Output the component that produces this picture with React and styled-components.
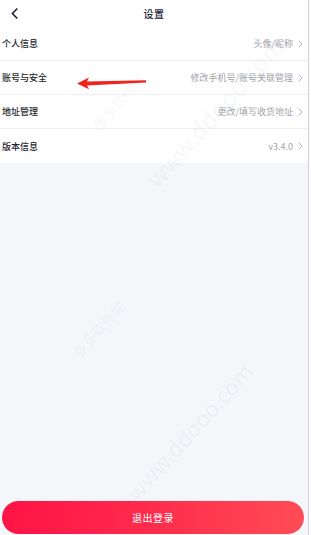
import React from 'react';
import styled, { createGlobalStyle } from 'styled-components';

const GlobalStyle = createGlobalStyle`
  html, body {
    margin: 0;
    padding: 0;
    background: #ffffff;
  }
  body {
    font-family: "Noto Sans CJK SC", "Noto Sans", sans-serif;
  }
`;

const Page = styled.div`
  position: relative;
  width: 308px;
  height: 535px;
  border-right: 1px solid #cfd0d4;
  background: #f5f6fa;
  display: flex;
  flex-direction: column;
  overflow: hidden;
`;

const Header = styled.div`
  height: 27px;
  background: #fff;
  display: flex;
  align-items: center;
  justify-content: center;
  position: relative;
`;

const BackButton = styled.div`
  position: absolute;
  left: 8px;
  top: 6px;
  width: 12px;
  height: 14px;
  display: flex;
  align-items: center;
  justify-content: center;
`;

const Title = styled.div`
  font-size: 10px;
  color: #23253a;
  font-weight: 500;
  letter-spacing: 0.5px;
`;

const List = styled.div`
  background: #fff;
  display: flex;
  flex-direction: column;
`;

const Row = styled.div`
  height: 34px;
  display: flex;
  align-items: center;
  justify-content: space-between;
  padding: 0 5px 0 2px;
  border-bottom: ${p => (p.last ? 'none' : '1px solid #eeeff2')};
  box-sizing: border-box;
`;

const Label = styled.div`
  font-size: 9px;
  font-weight: 500;
  color: #25262d;
`;

const Value = styled.div`
  display: flex;
  align-items: center;
  gap: 5px;
  font-size: 9px;
  color: #a3a4aa;
`;

const Spacer = styled.div`
  flex: 1;
`;

const LogoutButton = styled.div`
  margin: 0 4px 1px 2px;
  height: 33px;
  border-radius: 17px;
  background: linear-gradient(90deg, #ff1346 0%, #ff2c4c 50%, #ff4c56 100%);
  display: flex;
  align-items: center;
  justify-content: center;
  color: #fff;
  font-size: 10px;
  letter-spacing: 0.5px;
`;

const Arrow = styled.svg`
  position: absolute;
  left: 77px;
  top: 76px;
`;

const Watermark = styled.div`
  position: absolute;
  left: ${p => p.x}px;
  top: ${p => p.y}px;
  transform: rotate(-48deg);
  transform-origin: left center;
  font-size: ${p => p.size}px;
  color: rgba(120, 130, 150, 0.08);
  white-space: nowrap;
  pointer-events: none;
  font-family: "Noto Sans CJK SC", "Liberation Sans", sans-serif;
`;

const Chevron = () => (
  <svg width="5" height="8" viewBox="0 0 5 8">
    <path d="M0.8 0.8 L4 4 L0.8 7.2" fill="none" stroke="#a9aab0" strokeWidth="0.9" />
  </svg>
);

const rows = [
  { label: '个人信息', value: '头像/昵称' },
  { label: '账号与安全', value: '修改手机号/账号关联管理' },
  { label: '地址管理', value: '更改/填写收货地址' },
  { label: '版本信息', value: 'v3.4.0' },
];

export default function App() {
  return (
    <>
      <GlobalStyle />
      <Page>
        <Header>
          <BackButton>
            <svg width="7" height="11" viewBox="0 0 7 11">
              <path d="M5.8 1 L1.4 5.5 L5.8 10" fill="none" stroke="#1f2130" strokeWidth="1.7" strokeLinecap="round" strokeLinejoin="round" />
            </svg>
          </BackButton>
          <Title>设置</Title>
        </Header>
        <List>
          {rows.map((r, i) => (
            <Row key={r.label} last={i === rows.length - 1}>
              <Label>{r.label}</Label>
              <Value>
                {r.value}
                <Chevron />
              </Value>
            </Row>
          ))}
        </List>
        <Spacer />
        <LogoutButton>退出登录</LogoutButton>

        <Arrow width="70" height="14" viewBox="0 0 70 14">
          <path d="M0 7.5 L12 1.5 L10 5.6 L69 4.2 L69 6.4 L10 9.6 L12 13.2 Z" fill="#f0241c" />
        </Arrow>

        <Watermark x={95} y={118} size={14}>多多软件站</Watermark>
        <Watermark x={150} y={165} size={24}>www.ddooo.com</Watermark>
        <Watermark x={75} y={345} size={14}>多多软件站</Watermark>
        <Watermark x={130} y={480} size={22}>www.ddooo.com</Watermark>
      </Page>
    </>
  );
}
